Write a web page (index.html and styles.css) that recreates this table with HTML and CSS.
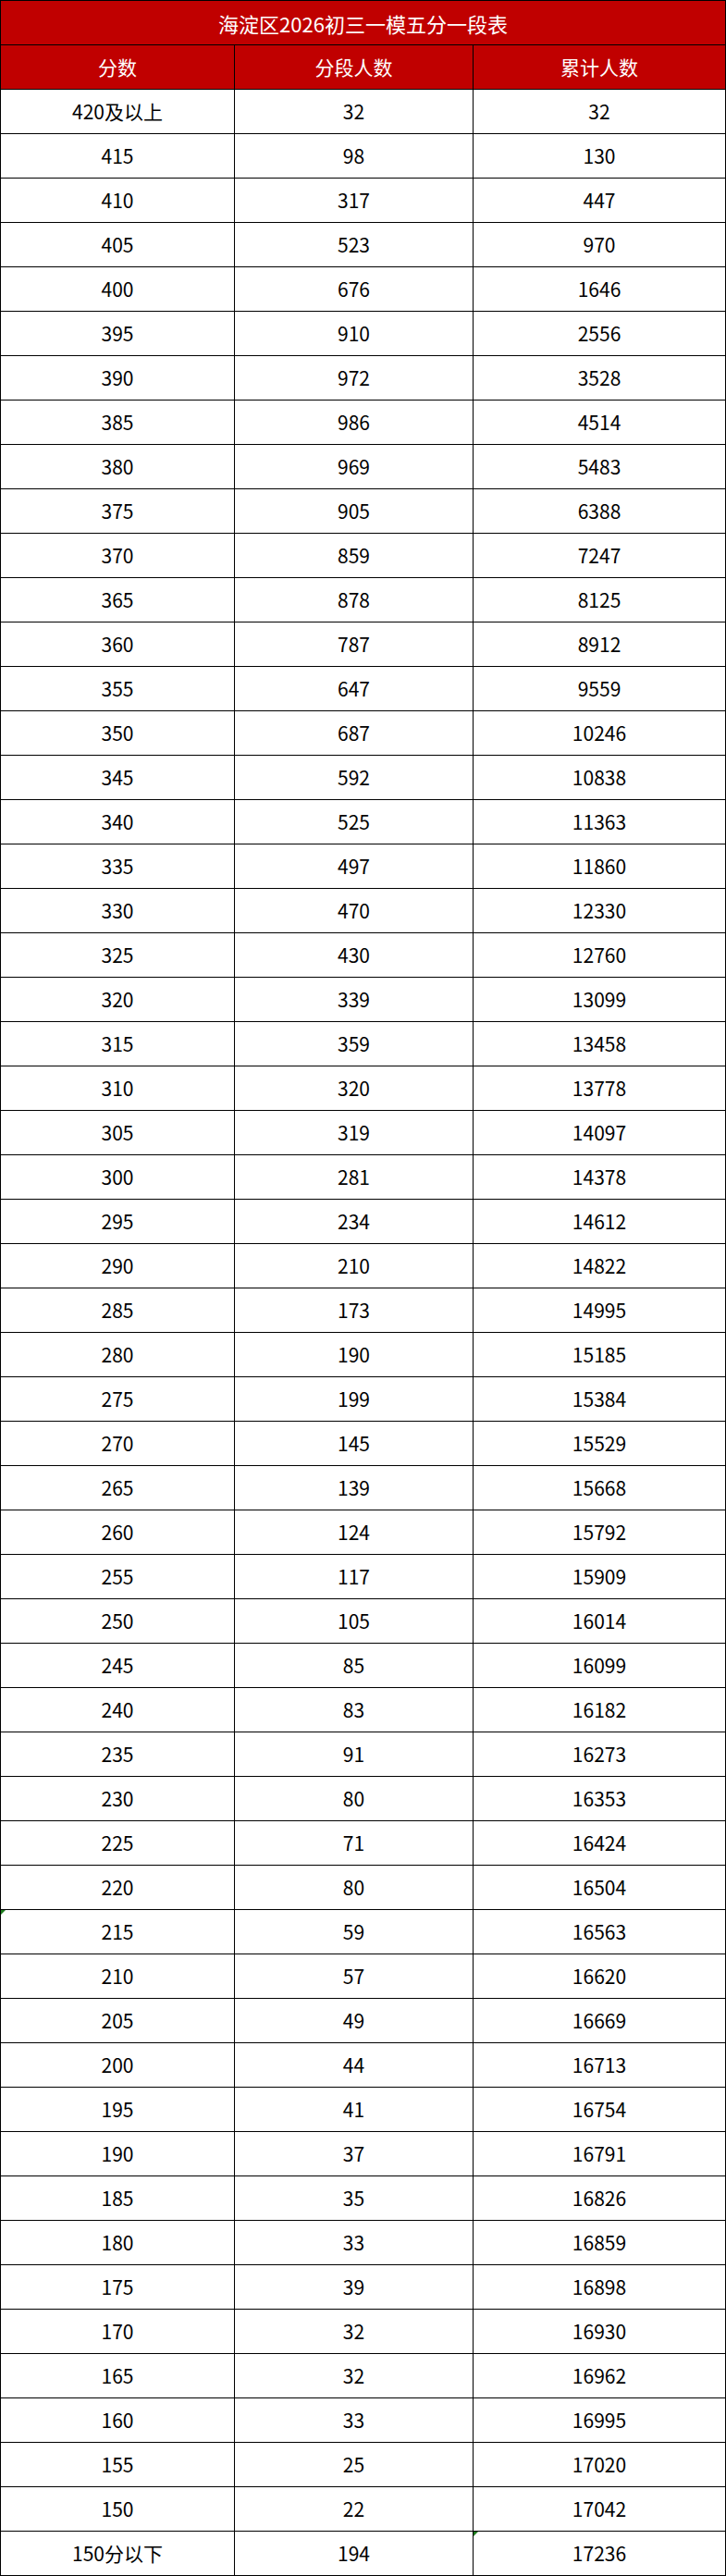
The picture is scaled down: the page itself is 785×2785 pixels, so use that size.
FILE: index.html
```html
<!DOCTYPE html>
<html lang="zh-CN">
<head>
<meta charset="utf-8">
<title>海淀区2026初三一模五分一段表</title>
<link rel="stylesheet" href="styles.css">
</head>
<body>
<table class="score-table">
<colgroup>
<col class="c1"><col class="c2"><col class="c3">
</colgroup>
<thead>
<tr><th class="title" colspan="3">海淀区2026初三一模五分一段表</th></tr>
<tr class="head"><th>分数</th><th>分段人数</th><th>累计人数</th></tr>
</thead>
<tbody>
<tr><td>420及以上</td><td>32</td><td>32</td></tr>
<tr><td>415</td><td>98</td><td>130</td></tr>
<tr><td>410</td><td>317</td><td>447</td></tr>
<tr><td>405</td><td>523</td><td>970</td></tr>
<tr><td>400</td><td>676</td><td>1646</td></tr>
<tr><td>395</td><td>910</td><td>2556</td></tr>
<tr><td>390</td><td>972</td><td>3528</td></tr>
<tr><td>385</td><td>986</td><td>4514</td></tr>
<tr><td>380</td><td>969</td><td>5483</td></tr>
<tr><td>375</td><td>905</td><td>6388</td></tr>
<tr><td>370</td><td>859</td><td>7247</td></tr>
<tr><td>365</td><td>878</td><td>8125</td></tr>
<tr><td>360</td><td>787</td><td>8912</td></tr>
<tr><td>355</td><td>647</td><td>9559</td></tr>
<tr><td>350</td><td>687</td><td>10246</td></tr>
<tr><td>345</td><td>592</td><td>10838</td></tr>
<tr><td>340</td><td>525</td><td>11363</td></tr>
<tr><td>335</td><td>497</td><td>11860</td></tr>
<tr><td>330</td><td>470</td><td>12330</td></tr>
<tr><td>325</td><td>430</td><td>12760</td></tr>
<tr><td>320</td><td>339</td><td>13099</td></tr>
<tr><td>315</td><td>359</td><td>13458</td></tr>
<tr><td>310</td><td>320</td><td>13778</td></tr>
<tr><td>305</td><td>319</td><td>14097</td></tr>
<tr><td>300</td><td>281</td><td>14378</td></tr>
<tr><td>295</td><td>234</td><td>14612</td></tr>
<tr><td>290</td><td>210</td><td>14822</td></tr>
<tr><td>285</td><td>173</td><td>14995</td></tr>
<tr><td>280</td><td>190</td><td>15185</td></tr>
<tr><td>275</td><td>199</td><td>15384</td></tr>
<tr><td>270</td><td>145</td><td>15529</td></tr>
<tr><td>265</td><td>139</td><td>15668</td></tr>
<tr><td>260</td><td>124</td><td>15792</td></tr>
<tr><td>255</td><td>117</td><td>15909</td></tr>
<tr><td>250</td><td>105</td><td>16014</td></tr>
<tr><td>245</td><td>85</td><td>16099</td></tr>
<tr><td>240</td><td>83</td><td>16182</td></tr>
<tr><td>235</td><td>91</td><td>16273</td></tr>
<tr><td>230</td><td>80</td><td>16353</td></tr>
<tr><td>225</td><td>71</td><td>16424</td></tr>
<tr><td>220</td><td>80</td><td>16504</td></tr>
<tr><td class="flag">215</td><td>59</td><td>16563</td></tr>
<tr><td>210</td><td>57</td><td>16620</td></tr>
<tr><td>205</td><td>49</td><td>16669</td></tr>
<tr><td>200</td><td>44</td><td>16713</td></tr>
<tr><td>195</td><td>41</td><td>16754</td></tr>
<tr><td>190</td><td>37</td><td>16791</td></tr>
<tr><td>185</td><td>35</td><td>16826</td></tr>
<tr><td>180</td><td>33</td><td>16859</td></tr>
<tr><td>175</td><td>39</td><td>16898</td></tr>
<tr><td>170</td><td>32</td><td>16930</td></tr>
<tr><td>165</td><td>32</td><td>16962</td></tr>
<tr><td>160</td><td>33</td><td>16995</td></tr>
<tr><td>155</td><td>25</td><td>17020</td></tr>
<tr><td>150</td><td>22</td><td>17042</td></tr>
<tr><td>150分以下</td><td>194</td><td class="flag">17236</td></tr>
</tbody>
</table>
</body>
</html>
```
FILE: styles.css
```css
html, body {
  margin: 0;
  padding: 0;
  background: #ffffff;
}

.score-table {
  width: 785px;
  table-layout: fixed;
  border-collapse: separate;
  border-spacing: 1px;
  background: #000000;
  font-family: "Noto Sans CJK SC", "Noto Sans", sans-serif;
  color: #000000;
}

.c1 { width: 252px; }
.c2 { width: 257px; }
.c3 { width: 272px; }

.score-table th,
.score-table td {
  height: 47px;
  padding: 0;
  text-align: center;
  vertical-align: middle;
  line-height: 1;
}

.score-table th {
  background: #c00000;
  color: #ffffff;
  font-weight: normal;
  font-size: 21px;
}

.score-table th.title {
  font-size: 22px;
}

.score-table td {
  background: #ffffff;
  font-size: 21px;
}

.score-table td.flag {
  position: relative;
}

.score-table td.flag::before {
  content: "";
  position: absolute;
  left: 0;
  top: 0;
  width: 0;
  height: 0;
  border-top: 5px solid #1e7d1e;
  border-right: 5px solid transparent;
}
```
